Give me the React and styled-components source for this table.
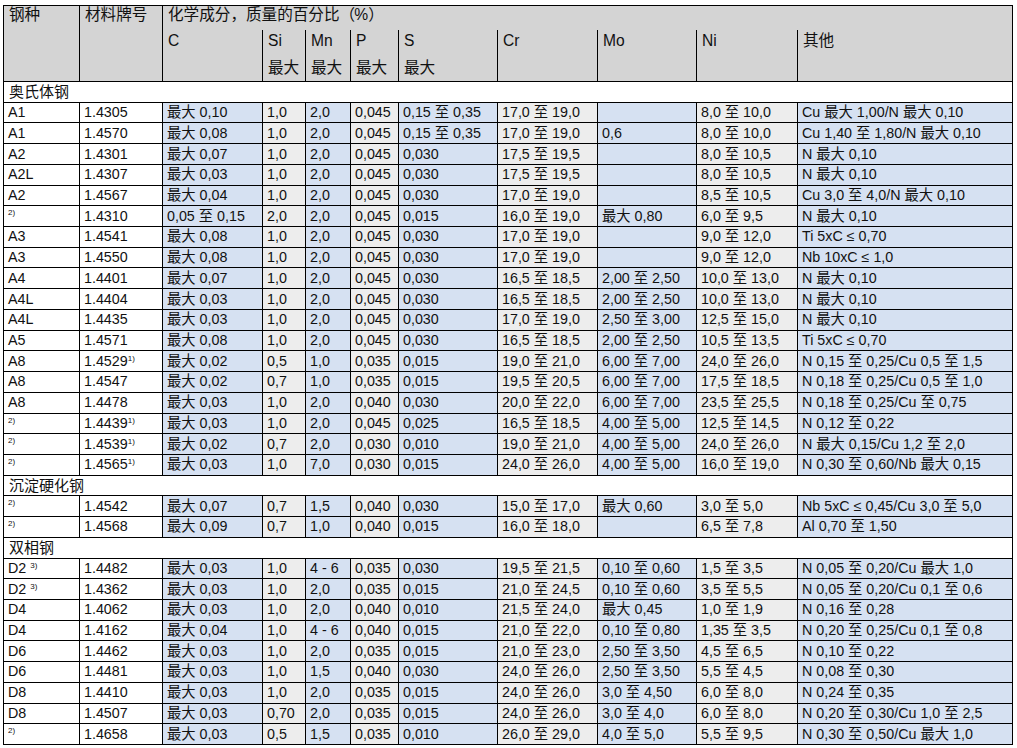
import React from 'react'
import styled, { createGlobalStyle } from 'styled-components'

const GlobalStyle = createGlobalStyle`
  html, body {
    margin: 0;
    padding: 0;
    background: #ffffff;
  }
  body {
    font-family: "Liberation Sans", "Noto Sans CJK SC", Arial, sans-serif;
    color: #111111;
  }
`

const COL_WIDTHS = [76, 83, 100, 43, 45, 48, 99, 100, 99, 101, 215]
const TONES = ['plain', 'plain', 'blue', 'grey', 'blue', 'grey', 'blue', 'grey', 'blue', 'grey', 'blue']

const toneColor = {
  plain: '#ffffff',
  blue: '#d6e1f2',
  grey: '#ededed',
}

const Table = styled.table`
  margin: 5px 0 0 3px;
  width: 1010px;
  table-layout: fixed;
  border-collapse: separate;
  border-spacing: 0;
  border-top: 1px solid #000;
  border-left: 1px solid #000;
  font-size: 14.3px;
`

const Col = styled.col`
  width: ${(p) => p.$w}px;
`

const HeadRow = styled.tr`
  height: ${(p) => p.$h}px;
`

const HeadCell = styled.th`
  background: #d4d4d4;
  font-weight: normal;
  font-size: 15.6px;
  text-align: left;
  vertical-align: top;
  padding: 0 5px;
  line-height: 18px;
  border-right: 1px solid #000;
  border-bottom: ${(p) => (p.$noBottom ? 'none' : '1px solid #000')};
  white-space: nowrap;
`

const Paren = styled.span`
  display: inline-block;
  width: 0.95em;
  text-align: ${(p) => (p.$open ? 'right' : 'left')};
`

const HeadStack = styled.div`
  margin-top: -3px;
  line-height: 27px;
`

const Row = styled.tr`
  height: 20.72px;
`

const Cell = styled.td`
  background: ${(p) => toneColor[p.$tone]};
  border-right: 1px solid #000;
  border-bottom: 1px solid #000;
  padding: 0 4px;
  line-height: 15px;
  vertical-align: ${(p) => (p.$noteOnly ? 'top' : 'middle')};
  white-space: nowrap;
  overflow: hidden;
`

const SectionCell = styled.td`
  background: #ffffff;
  border-right: 1px solid #000;
  border-bottom: 1px solid #000;
  padding: 0 5px;
  font-size: 15px;
  line-height: 16px;
  vertical-align: middle;
`

const Sup = styled.sup`
  font-size: 8px;
  line-height: 0;
  vertical-align: 5px;
`

const Note = styled.span`
  display: block;
  font-size: 8px;
  line-height: 9px;
  padding-top: 2px;
`

const sections = [
  {
    title: '奥氏体钢',
    rows: [
      ['A1', '1.4305', '最大 0,10', '1,0', '2,0', '0,045', '0,15 至 0,35', '17,0 至 19,0', '', '8,0 至 10,0', 'Cu 最大 1,00/N 最大 0,10'],
      ['A1', '1.4570', '最大 0,08', '1,0', '2,0', '0,045', '0,15 至 0,35', '17,0 至 19,0', '0,6', '8,0 至 10,0', 'Cu 1,40 至 1,80/N 最大 0,10'],
      ['A2', '1.4301', '最大 0,07', '1,0', '2,0', '0,045', '0,030', '17,5 至 19,5', '', '8,0 至 10,5', 'N 最大 0,10'],
      ['A2L', '1.4307', '最大 0,03', '1,0', '2,0', '0,045', '0,030', '17,5 至 19,5', '', '8,0 至 10,5', 'N 最大 0,10'],
      ['A2', '1.4567', '最大 0,04', '1,0', '2,0', '0,045', '0,030', '17,0 至 19,0', '', '8,5 至 10,5', 'Cu 3,0 至 4,0/N 最大 0,10'],
      ['^2)', '1.4310', '0,05 至 0,15', '2,0', '2,0', '0,045', '0,015', '16,0 至 19,0', '最大 0,80', '6,0 至 9,5', 'N 最大 0,10'],
      ['A3', '1.4541', '最大 0,08', '1,0', '2,0', '0,045', '0,030', '17,0 至 19,0', '', '9,0 至 12,0', 'Ti 5xC ≤ 0,70'],
      ['A3', '1.4550', '最大 0,08', '1,0', '2,0', '0,045', '0,030', '17,0 至 19,0', '', '9,0 至 12,0', 'Nb 10xC ≤ 1,0'],
      ['A4', '1.4401', '最大 0,07', '1,0', '2,0', '0,045', '0,030', '16,5 至 18,5', '2,00 至 2,50', '10,0 至 13,0', 'N 最大 0,10'],
      ['A4L', '1.4404', '最大 0,03', '1,0', '2,0', '0,045', '0,030', '16,5 至 18,5', '2,00 至 2,50', '10,0 至 13,0', 'N 最大 0,10'],
      ['A4L', '1.4435', '最大 0,03', '1,0', '2,0', '0,045', '0,030', '17,0 至 19,0', '2,50 至 3,00', '12,5 至 15,0', 'N 最大 0,10'],
      ['A5', '1.4571', '最大 0,08', '1,0', '2,0', '0,045', '0,030', '16,5 至 18,5', '2,00 至 2,50', '10,5 至 13,5', 'Ti 5xC ≤ 0,70'],
      ['A8', '1.4529|1)', '最大 0,02', '0,5', '1,0', '0,035', '0,015', '19,0 至 21,0', '6,00 至 7,00', '24,0 至 26,0', 'N 0,15 至 0,25/Cu 0,5 至 1,5'],
      ['A8', '1.4547', '最大 0,02', '0,7', '1,0', '0,035', '0,015', '19,5 至 20,5', '6,00 至 7,00', '17,5 至 18,5', 'N 0,18 至 0,25/Cu 0,5 至 1,0'],
      ['A8', '1.4478', '最大 0,03', '1,0', '2,0', '0,040', '0,030', '20,0 至 22,0', '6,00 至 7,00', '23,5 至 25,5', 'N 0,18 至 0,25/Cu 至 0,75'],
      ['^2)', '1.4439|1)', '最大 0,03', '1,0', '2,0', '0,045', '0,025', '16,5 至 18,5', '4,00 至 5,00', '12,5 至 14,5', 'N 0,12 至 0,22'],
      ['^2)', '1.4539|1)', '最大 0,02', '0,7', '2,0', '0,030', '0,010', '19,0 至 21,0', '4,00 至 5,00', '24,0 至 26,0', 'N 最大 0,15/Cu 1,2 至 2,0'],
      ['^2)', '1.4565|1)', '最大 0,03', '1,0', '7,0', '0,030', '0,015', '24,0 至 26,0', '4,00 至 5,00', '16,0 至 19,0', 'N 0,30 至 0,60/Nb 最大 0,15'],
    ],
  },
  {
    title: '沉淀硬化钢',
    rows: [
      ['^2)', '1.4542', '最大 0,07', '0,7', '1,5', '0,040', '0,030', '15,0 至 17,0', '最大 0,60', '3,0 至 5,0', 'Nb 5xC ≤ 0,45/Cu 3,0 至 5,0'],
      ['^2)', '1.4568', '最大 0,09', '0,7', '1,0', '0,040', '0,015', '16,0 至 18,0', '', '6,5 至 7,8', 'Al 0,70 至 1,50'],
    ],
  },
  {
    title: '双相钢',
    rows: [
      ['D2 |3)', '1.4482', '最大 0,03', '1,0', '4 - 6', '0,035', '0,030', '19,5 至 21,5', '0,10 至 0,60', '1,5 至 3,5', 'N 0,05 至 0,20/Cu 最大 1,0'],
      ['D2 |3)', '1.4362', '最大 0,03', '1,0', '2,0', '0,035', '0,015', '21,0 至 24,5', '0,10 至 0,60', '3,5 至 5,5', 'N 0,05 至 0,20/Cu 0,1 至 0,6'],
      ['D4', '1.4062', '最大 0,03', '1,0', '2,0', '0,040', '0,010', '21,5 至 24,0', '最大 0,45', '1,0 至 1,9', 'N 0,16 至 0,28'],
      ['D4', '1.4162', '最大 0,04', '1,0', '4 - 6', '0,040', '0,015', '21,0 至 22,0', '0,10 至 0,80', '1,35 至 3,5', 'N 0,20 至 0,25/Cu 0,1 至 0,8'],
      ['D6', '1.4462', '最大 0,03', '1,0', '2,0', '0,035', '0,015', '21,0 至 23,0', '2,50 至 3,50', '4,5 至 6,5', 'N 0,10 至 0,22'],
      ['D6', '1.4481', '最大 0,03', '1,0', '1,5', '0,040', '0,030', '24,0 至 26,0', '2,50 至 3,50', '5,5 至 4,5', 'N 0,08 至 0,30'],
      ['D8', '1.4410', '最大 0,03', '1,0', '2,0', '0,035', '0,015', '24,0 至 26,0', '3,0 至 4,50', '6,0 至 8,0', 'N 0,24 至 0,35'],
      ['D8', '1.4507', '最大 0,03', '0,70', '2,0', '0,035', '0,015', '24,0 至 26,0', '3,0 至 4,0', '6,0 至 8,0', 'N 0,20 至 0,30/Cu 1,0 至 2,5'],
      ['^2)', '1.4658', '最大 0,03', '0,5', '1,5', '0,035', '0,010', '26,0 至 29,0', '4,0 至 5,0', '5,5 至 9,5', 'N 0,30 至 0,50/Cu 最大 1,0'],
    ],
  },
]

const elements = [
  ['C', ''],
  ['Si', '最大'],
  ['Mn', '最大'],
  ['P', '最大'],
  ['S', '最大'],
  ['Cr', ''],
  ['Mo', ''],
  ['Ni', ''],
  ['其他', ''],
]

// "^2)" = footnote mark only, "text|1)" = text followed by a superscript
function renderValue(value) {
  if (value.startsWith('^')) return <Note>{value.slice(1)}</Note>
  const [text, mark] = value.split('|')
  return (
    <>
      {text}
      {mark && <Sup>{mark}</Sup>}
    </>
  )
}

function DataRow({ values }) {
  return (
    <Row>
      {values.map((v, i) => (
        <Cell key={i} $tone={TONES[i]} $noteOnly={v.startsWith('^')}>
          {renderValue(v)}
        </Cell>
      ))}
    </Row>
  )
}

export default function App() {
  return (
    <>
      <GlobalStyle />
      <Table>
        <colgroup>
          {COL_WIDTHS.map((w, i) => <Col key={i} $w={w} />)}
        </colgroup>
        <thead>
          <HeadRow $h={24}>
            <HeadCell rowSpan={2}>钢种</HeadCell>
            <HeadCell rowSpan={2}>材料牌号</HeadCell>
            <HeadCell colSpan={9} $noBottom>
              化学成分，质量的百分比<Paren $open>（</Paren>%<Paren>）</Paren>
            </HeadCell>
          </HeadRow>
          <HeadRow $h={51}>
            {elements.map(([sym, note]) => (
              <HeadCell key={sym}>
                <HeadStack>
                  <div>{sym}</div>
                  {note && <div>{note}</div>}
                </HeadStack>
              </HeadCell>
            ))}
          </HeadRow>
        </thead>
        <tbody>
          {sections.map((section) => (
            <React.Fragment key={section.title}>
              <Row>
                <SectionCell colSpan={11}>{section.title}</SectionCell>
              </Row>
              {section.rows.map((values, i) => (
                <DataRow key={i} values={values} />
              ))}
            </React.Fragment>
          ))}
        </tbody>
      </Table>
    </>
  )
}
